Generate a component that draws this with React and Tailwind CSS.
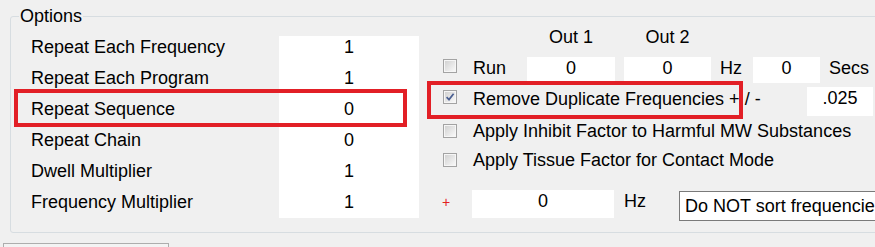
import React from "react";

function Check({ checked }) {
  return (
    <div className="w-[14px] h-[14px] border border-[#a3a3a3] bg-[#f6f6f6] p-[1px]">
      <div className="w-full h-full bg-gradient-to-br from-[#d2d2d2] to-[#f8f8f8] flex items-center justify-center">
        {checked && (
          <svg width="10" height="10" viewBox="0 0 10 10">
            <path d="M1.6 5.2 L4 7.6 L8.6 1.8" stroke="#4a5f91" strokeWidth="1.7" fill="none" />
          </svg>
        )}
      </div>
    </div>
  );
}

const rows = [
  ["Repeat Each Frequency", "1"],
  ["Repeat Each Program", "1"],
  ["Repeat Sequence", "0"],
  ["Repeat Chain", "0"],
  ["Dwell Multiplier", "1"],
  ["Frequency Multiplier", "1"],
];

export default function App() {
  return (
    <div className="relative w-[875px] h-[247px] overflow-hidden bg-[#f0f0f0] text-[18px] leading-[22px] text-black font-['Liberation_Sans',Arial,sans-serif]">
      <fieldset className="mt-[6px] ml-[10px] w-[940px] h-[227px] border border-[#d7dde1] rounded-[3px]">
        <legend className="ml-[8px] px-[1px] leading-[20px]">Options</legend>
        <div className="flex">
          <div className="ml-[20px] mt-[10px] w-[248px] shrink-0">
            {rows.map(([l]) => (
              <div key={l} className="h-[31px] whitespace-nowrap">{l}</div>
            ))}
          </div>
          <div className="mt-[10px] w-[140px] h-[182px] bg-white shrink-0 overflow-hidden">
            {rows.map(([l, v]) => (
              <div key={l} className="h-[31px] text-center">{v}</div>
            ))}
          </div>
          <div className="ml-[24px] w-[480px] shrink-0 flex flex-col">
            <div className="flex h-[22px]">
              <div className="w-[84px] shrink-0" />
              <div className="w-[88px] shrink-0 text-center">Out 1</div>
              <div className="ml-[9px] w-[87px] shrink-0 text-center">Out 2</div>
            </div>
            <div className="mt-[9px] h-[26px] flex items-start">
              <div className="w-[30px] pt-[2px] shrink-0"><Check /></div>
              <div className="w-[54px] shrink-0">Run</div>
              <div className="w-[88px] h-[26px] shrink-0 bg-white text-center">0</div>
              <div className="ml-[9px] w-[87px] h-[26px] shrink-0 bg-white text-center">0</div>
              <div className="ml-[9px] w-[33px] shrink-0">Hz</div>
              <div className="w-[67px] h-[26px] shrink-0 bg-white text-center">0</div>
              <div className="ml-[9px] shrink-0">Secs</div>
            </div>
            <div className="mt-[3px] h-[30px] flex items-start">
              <div className="w-[30px] pt-[4px] shrink-0"><Check checked /></div>
              <div className="w-[334px] pt-[2px] shrink-0 whitespace-nowrap">Remove Duplicate Frequencies + / -</div>
              <div className="w-[66px] h-[29px] mt-[1px] shrink-0 bg-white text-center">.025</div>
            </div>
            <div className="h-[29px] flex items-center">
              <div className="w-[30px] shrink-0"><Check /></div>
              <div className="whitespace-nowrap">Apply Inhibit Factor to Harmful MW Substances</div>
            </div>
            <div className="h-[30px] flex items-center">
              <div className="w-[30px] shrink-0"><Check /></div>
              <div className="whitespace-nowrap">Apply Tissue Factor for Contact Mode</div>
            </div>
            <div className="mt-[15px] h-[31px] flex items-start">
              <div className="w-[30px] shrink-0 -ml-[1px] mt-[5px] text-[14px] leading-[14px] text-[#e3211f]">+</div>
              <div className="w-[142px] h-[28px] shrink-0 bg-white text-center">0</div>
              <div className="ml-[10px] w-[55px] shrink-0">Hz</div>
              <div className="mt-[1px] h-[30px] w-[260px] shrink-0 border border-[#7a7a7a] bg-white pl-[5px] pt-[3px] whitespace-nowrap overflow-hidden">
                Do NOT sort frequencies
              </div>
            </div>
          </div>
        </div>
      </fieldset>
      <div className="mt-[10px] ml-[3px] w-[166px] h-[20px] border border-[#adadad] bg-[#f3f3f3]" />
      <div className="absolute left-[14px] top-[89px] w-[393px] h-[38px] border-[4px] border-[#e21f26]" />
      <div className="absolute left-[427px] top-[81px] w-[316px] h-[38px] border-[4px] border-[#e21f26]" />
    </div>
  );
}
